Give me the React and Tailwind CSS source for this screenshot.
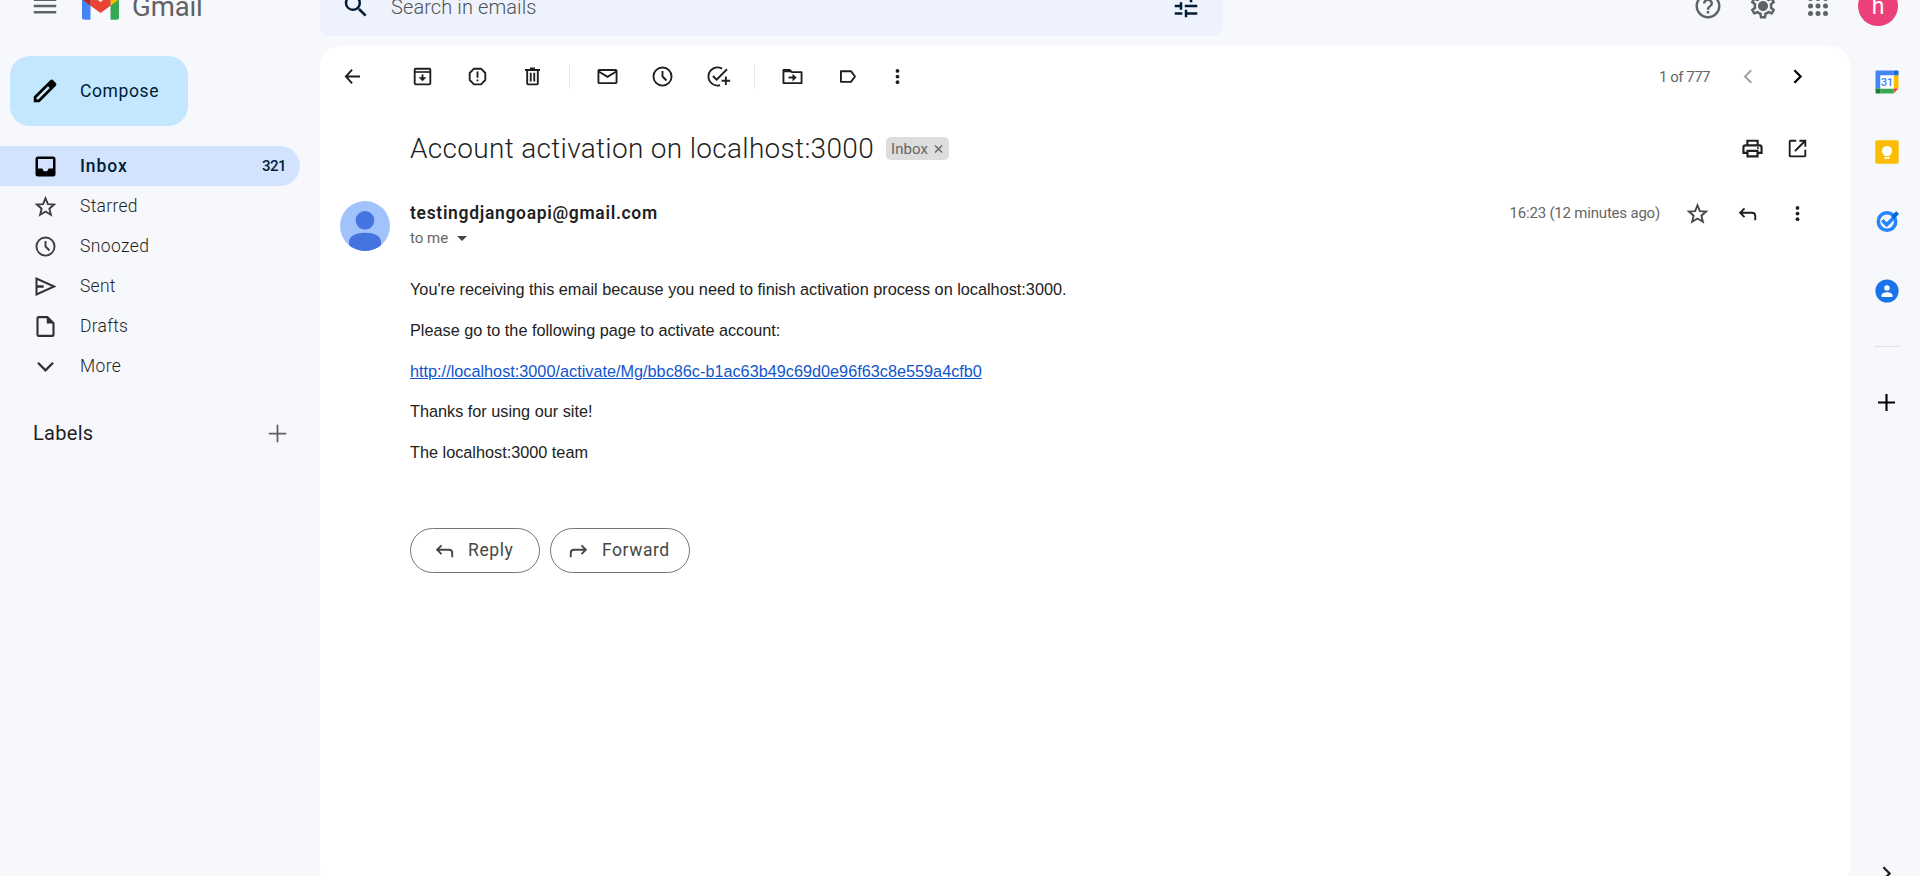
import { MdHelpOutline, MdMenu, MdOutlineSettings, MdSearch, MdTune } from "react-icons/md";

const Svg = ({ children, className = "size-[25px] text-[#1f1f1f]", box = 20, sw = 1.5 }) => (
  <svg viewBox={`0 0 ${box} ${box}`} className={`shrink-0 ${className}`} fill="none" stroke="currentColor" strokeWidth={sw}>
    {children}
  </svg>
);

const Dots = () => (
  <Svg>
    <g fill="currentColor" stroke="none">
      <circle cx="10" cy="5.5" r="1.5" />
      <circle cx="10" cy="10" r="1.5" />
      <circle cx="10" cy="14.5" r="1.5" />
    </g>
  </Svg>
);

const Archive = () => (
  <Svg>
    <rect x="3.75" y="3.75" width="12.5" height="12.5" rx="0.8" />
    <path d="M4 6.4h12" strokeWidth="1.3" />
    <path d="M10 8.3v3.5" />
    <path d="M6.8 10.5h6.4L10 13.8z" fill="currentColor" stroke="none" />
  </Svg>
);
const Report = () => (
  <Svg>
    <path d="M7.2 3.75h5.6l3.45 3.45v5.6l-3.45 3.45H7.2L3.75 12.8V7.2z" strokeLinejoin="round" />
    <path d="M10 6v5M10 12.3v1.5" />
  </Svg>
);
const Trash = () => (
  <Svg>
    <path d="M4 4.75h12M8 3.6h4" />
    <path d="M5.75 5v10.6q0 .65.65.65h7.2q.65 0 .65-.65V5" />
    <path d="M8.6 7v7M11.4 7v7" />
  </Svg>
);
const Mail = () => (
  <Svg>
    <rect x="2.75" y="4.75" width="14.5" height="10.5" rx="0.7" />
    <path d="M3 6l7 4.3L17 6" />
  </Svg>
);
const Clock = ({ className }) => (
  <Svg className={className}>
    <circle cx="10" cy="10" r="7.25" />
    <path d="M10 5.5V10l3.2 3.2" />
  </Svg>
);
const AddTask = () => (
  <Svg className="size-[25px] overflow-visible text-[#1f1f1f]">
    <path d="M13.6 3.7A7.25 7.25 0 1 0 12 17" />
    <path d="M6.3 9.6l3 3L17.6 4.2" />
    <path d="M16.7 10v6.8M13.3 13.4h6.8" />
  </Svg>
);
const MoveTo = () => (
  <Svg>
    <path d="M2.75 15.25V4.75h5l1.7 1.7h7.8v8.8z" strokeLinejoin="round" />
    <path d="M2.5 4.5h5.2l2 2H2.5z" fill="currentColor" stroke="none" />
    <path d="M6.8 10.8h4" />
    <path d="M10 7.7v6.2l3.3-3.1z" fill="currentColor" stroke="none" />
  </Svg>
);
const Label = () => (
  <Svg>
    <path d="M4.75 5.75h8L16 10l-3.25 4.25h-8z" strokeLinejoin="round" />
  </Svg>
);
const Star = ({ className }) => (
  <Svg className={className} sw={1.5}>
    <path d="M10 3.4l1.9 4.65 5 .4-3.8 3.3 1.2 4.9L10 14l-4.3 2.65 1.2-4.900-3.800-3.300 5-.4z" />
  </Svg>
);
const ReplyArrow = ({ className = "size-[25px] text-[#1f1f1f]" }) => (
  <Svg className={className}>
    <path d="M7.6 5.9L4.1 9.4l3.5 3.5M4.2 9.4h9.3q2.7 0 2.7 2.7v3.2" />
  </Svg>
);

const nav = [
  { name: "Starred", track: "tracking-[0.3px]", icon: <Star className="size-[25px] text-[#3c3d40]" /> },
  { name: "Snoozed", track: "tracking-[0.4px]", icon: <Clock className="size-[25px] text-[#3c3d40]" /> },
  {
    name: "Sent", track: "tracking-[0.25px]",
    icon: (
      <Svg className="size-[25px] text-[#303134]">
        <path d="M2.8 3.7v12.6L16.900 10z" strokeWidth="1.600" />
        <path d="M3 10h5.5" strokeWidth="2" />
      </Svg>
    ),
  },
  {
    name: "Drafts", track: "tracking-[0.25px]",
    icon: (
      <Svg className="size-[25px] text-[#303134]">
        <path d="M4.6 2.5h6.9l4.9 4.9v9.1q0 1-1 1H4.6q-1 0-1-1v-13q0-1 1-1z" strokeWidth="1.700" />
        <path d="M11 2.2v5.4h5.4z" fill="currentColor" stroke="none" />
      </Svg>
    ),
  },
  {
    name: "More", track: "tracking-[0.35px]",
    icon: (
      <Svg className="size-[25px] text-[#303134]" sw={1.9}>
        <path d="M4 7l6 6 6-6" />
      </Svg>
    ),
  },
];

const Cell = ({ children }) => <div className="flex w-[55px] justify-center">{children}</div>;

function Header() {
  return (
    <header className="-mt-[34px] flex h-20 shrink-0 items-center">
      <div className="flex w-80 shrink-0 items-center pl-[30px] text-[#5f6368]">
        <MdMenu className="size-[30px]" />
        <svg viewBox="0 0 37 28" className="ml-[22px] h-7 w-[37px]">
          <path d="M0 4v21.2Q0 27.7 2.5 27.7h6V7z" fill="#4285f4" />
          <path d="M37 4v21.2q0 2.5-2.5 2.5h-6V7z" fill="#34a853" />
          <path d="M28.5 2.5v11.2L37 7.3V4c0-3.4-3.7-5-6.3-3.2z" fill="#fbbc04" />
          <path d="M8.5 13.7V2.5l10 7.5 10-7.5v11.2l-10 7.4z" fill="#ea4335" />
          <path d="M0 4v3.3l8.5 6.4V2.5L6.3.8C3.700-1 0 .6 0 4z" fill="#c5221f" />
        </svg>
        <span className="ml-[13px] pt-0.5 text-[27.5px] leading-8 tracking-[-0.1px]">Gmail</span>
      </div>
      <div className="flex h-[60px] w-[903px] items-center rounded-[10px] bg-[#edf2fc] pr-[22px] pl-[21px] text-[#001d35]">
        <MdSearch className="size-[30px]" />
        <span className="ml-5 flex-1 pt-[2px] text-xl leading-6 font-light tracking-[0.1px] text-[#4f5358]">Search in emails</span>
        <MdTune className="size-[30px]" />
      </div>
      <div className="ml-auto flex items-center gap-[25px] pr-[22px] text-[#5f6368]">
        <MdHelpOutline className="size-[30px]" />
        <svg viewBox="0 0 24 24" className="size-[30px]">
          <MdOutlineSettings size="24" />
          <circle cx="12" cy="12" r="3.700" fill="currentColor" />
        </svg>
        <svg viewBox="0 0 24 24" className="size-[30px]" fill="currentColor">
          {[6, 12, 18].map((y) => [6, 12, 18].map((x) => <circle key={`${x}-${y}`} cx={x} cy={y} r="2" />))}
        </svg>
        <div className="flex size-10 items-center justify-center rounded-full bg-[#ec407a] pt-[2px] text-[23px] leading-6 text-white">h</div>
      </div>
    </header>
  );
}

function Sidebar() {
  return (
    <aside className="w-80 shrink-0 pt-[10px]">
      <div className="ml-[10px] flex h-[70px] w-[178px] items-center rounded-[20px] bg-[#c2e7ff] pl-5 text-[#001d35]">
        <svg viewBox="0 0 24 24" className="size-[30px] text-black">
          <path
            fill="currentColor" fillRule="evenodd"
            d="M3 21v-4.600L16.200 3.300q1.200-.9 2.300 0l2.200 2.200q.9 1.200 0 2.300L7.600 21zM5.200 18.800h1.400l9.200-9.200-1.400-1.400-9.200 9.200z"
          />
        </svg>
        <span className="ml-[20px] text-[17.5px] leading-5 tracking-[0.6px]">Compose</span>
      </div>
      <nav className="mt-5 w-[300px] text-[#1f1f1f]">
        <div className="flex h-10 items-center rounded-r-full bg-[#d3e3fd] pr-[14px] pl-[33px] text-[#001d35]">
          <svg viewBox="0 0 20 20" className="size-[25px] text-black">
            <path
              fill="currentColor" fillRule="evenodd"
              d="M4 2h12q2 0 2 2v12q0 2-2 2H4q-2 0-2-2V4q0-2 2-2zM4 4v7.500h3.600q.5 2.300 2.400 2.300t2.400-2.300H16V4z"
            />
          </svg>
          <span className="ml-[22px] flex-1 text-[17.5px] leading-5 font-medium tracking-[0.9px]">Inbox</span>
          <span className="text-[15px] leading-5 font-medium tracking-[-0.5px]">321</span>
        </div>
        {nav.map((n) => (
          <div key={n.name} className="flex h-10 items-center pl-[33px]">
            {n.icon}
            <span className={`ml-[22px] text-[17.5px] leading-5 font-light ${n.track}`}>{n.name}</span>
          </div>
        ))}
      </nav>
      <div className="mt-[35px] flex h-[24px] w-[290px] items-center justify-between pl-[33px] text-[#1f1f1f]">
        <span className="text-xl leading-6 tracking-[0.3px]">Labels</span>
        <Svg className="size-[25px] text-[#5f5f5f]" sw={1.4}>
          <path d="M10 3v14M3 10h14" />
        </Svg>
      </div>
    </aside>
  );
}

function Toolbar() {
  return (
    <div className="flex h-[61px] items-center pr-[40px] pl-[5px]">
      <Cell>
        <Svg>
          <path d="M16 10H5M9.700 4.500L4.700 10l5 5.500" />
        </Svg>
      </Cell>
      <div className="ml-[15px] flex items-center">
        <Cell><Archive /></Cell>
        <Cell><Report /></Cell>
        <Cell><Trash /></Cell>
        <div className="mr-[10px] ml-[9px] h-[25px] w-px bg-[#e6e8eb]" />
        <Cell><Mail /></Cell>
        <Cell><Clock /></Cell>
        <Cell><AddTask /></Cell>
        <div className="mr-[10px] ml-[9px] h-[25px] w-px bg-[#e6e8eb]" />
        <Cell><MoveTo /></Cell>
        <Cell><Label /></Cell>
        <div className="-ml-[5px] flex"><Cell><Dots /></Cell></div>
      </div>
      <span className="ml-auto text-[15px] leading-5 tracking-[-0.5px] text-[#666]">1 of 777</span>
      <div className="ml-[25px] flex gap-[25px]">
        <Svg className="size-[25px] text-[#a0a0a0]">
          <path d="M13 5l-5 5 5 5" />
        </Svg>
        <Svg className="size-[25px] text-black" sw={1.8}>
          <path d="M7.500 5l5 5-5 5" />
        </Svg>
      </div>
    </div>
  );
}

function Message() {
  return (
    <>
      <div className="flex h-[41px] items-center pr-[40px] pl-[90px]">
        <h1 className="text-[28px] leading-9 font-light tracking-[0.31px] text-[#1f1f1f]">Account activation on localhost:3000</h1>
        <div className="ml-[12px] flex h-[23px] w-[63px] items-center rounded-[5px] bg-[#ddd] pl-[5px] text-[#666]">
          <span className="text-[15px] leading-5 tracking-[0.1px]">Inbox</span>
          <Svg className="ml-[4px] size-[13px]" box={13} sw={1.4}>
            <path d="M3 3.500l7 7M10 3.500l-7 7" />
          </Svg>
        </div>
        <div className="ml-auto flex gap-5">
          <Svg>
            <path d="M5.900 7V3.750h8.200V7M5.900 13.500H2.750V9.200q0-1.700 1.700-1.700h11.100q1.700 0 1.700 1.700v4.300H14.100" strokeWidth="1.700" />
            <path d="M6 11.900h8v4.350H6z" strokeWidth="1.700" />
            <circle cx="14.300" cy="9.600" r=".8" fill="currentColor" stroke="none" />
          </Svg>
          <Svg>
            <path d="M9 3.750H4.500q-.75 0-.75.75v11q0 .75.750.750h11q.75 0 .75-.75V11M11.500 3.750h4.750V8.500M16 4L8 12" />
          </Svg>
        </div>
      </div>
      <div className="mt-[11px] flex pl-5">
        <svg viewBox="0 0 50 50" className="mt-[21px] size-[50px] shrink-0 rounded-full">
          <rect width="50" height="50" fill="#a1c2fa" />
          <circle cx="25" cy="19.300" r="9.300" fill="#4374e0" />
          <path d="M9 50V40.500C9.500 35 16 31.700 25 31.700s15.500 3.300 16 8.800V50z" fill="#4374e0" />
        </svg>
        <div className="ml-5 flex-1 pt-[21px]">
          <div className="flex items-center pr-[40px]">
            <span className="text-[17.5px] leading-[25px] font-semibold tracking-[0.68px] text-[#1f1f1f]">testingdjangoapi@gmail.com</span>
            <span className="ml-auto pb-px text-[15px] leading-5 tracking-[-0.2px] text-[#666]">16:23 (12 minutes ago)</span>
            <div className="ml-[25px] flex gap-[25px]">
              <Star className="size-[25px] text-[#444746]" />
              <ReplyArrow />
              <Dots />
            </div>
          </div>
          <div className="flex h-[25px] items-center text-[#666]">
            <span className="pb-[2px] text-[15px] leading-5">to me</span>
            <svg viewBox="0 0 10 5" className="ml-[9px] h-[5px] w-[10px]">
              <path d="M0 0h10L5 5z" fill="#444746" />
            </svg>
          </div>
          <div className="mt-[26.300px] space-y-[16.25px] font-['Liberation_Sans',Arial,sans-serif] text-[16.25px] leading-[24.375px] text-[#222]">
            <p>You're receiving this email because you need to finish activation process on localhost:3000.</p>
            <p>Please go to the following page to activate account:</p>
            <p>
              <a className="text-[#1155cc] underline">http://localhost:3000/activate/Mg/bbc86c-b1ac63b49c69d0e96f63c8e559a4cfb0</a>
            </p>
            <p>Thanks for using our site!</p>
            <p>The localhost:3000 team</p>
          </div>
          <div className="mt-[63.800px] flex gap-[10px] text-[17.5px] leading-5 text-[#444746]">
            <button className="flex h-[45px] w-[130px] items-center rounded-full border border-[#747775] pl-[21px]">
              <ReplyArrow className="size-[25px]" />
              <span className="ml-[11px] tracking-[0.6px]">Reply</span>
            </button>
            <button className="flex h-[45px] w-[140px] items-center rounded-full border border-[#747775] pl-[15px]">
              <ReplyArrow className="size-[25px] -scale-x-100" />
              <span className="ml-[11px] tracking-[0.55px]">Forward</span>
            </button>
          </div>
        </div>
      </div>
    </>
  );
}

function Rail() {
  return (
    <aside className="flex w-[70px] shrink-0 flex-col items-center pl-[3px]">
      <div className="flex h-[70px] items-center pt-px">
        <svg viewBox="0 0 24 24" className="size-6">
          <path d="M1.500.5h17v5H5.500v13h-5v-17q0-1 1-1z" fill="#4285f4" />
          <path d="M18.500.5h4q1 0 1 1v4h-5z" fill="#1967d2" />
          <path d="M18.500 5.500h5v13h-5z" fill="#fbbc04" />
          <path d="M5.500 18.500h13v5h-13z" fill="#34a853" />
          <path d="M.5 18.500h5v5h-4q-1 0-1-1z" fill="#188038" />
          <path d="M18.500 18.500h5l-5 5z" fill="#ea4335" />
          <path d="M5.500 5.500h13v13h-13z" fill="#fff" />
          <text x="12" y="15.800" textAnchor="middle" fontSize="10.500" fontWeight="600" fill="#4285f4">31</text>
        </svg>
      </div>
      <div className="flex h-[70px] items-center pt-px">
        <svg viewBox="0 0 24 24" className="size-6">
          <rect x=".3" y=".3" width="23.400" height="23.400" rx="1.800" fill="#fbbc04" />
          <path d="M12 6a5 5 0 0 0-2.700 9.200V16h5.400v-.8A5 5 0 0 0 12 6zM9.300 17h5.400v1.700H9.300z" fill="#fff" />
        </svg>
      </div>
      <div className="flex h-[70px] items-center">
        <svg viewBox="0 0 24 24" className="size-6">
          <circle cx="12" cy="12.500" r="8.700" fill="none" stroke="#2684fc" strokeWidth="3.600" />
          <path d="M7.200 11.300l4.500 4.400L20 7.500" fill="none" stroke="#2684fc" strokeWidth="3.600" />
          <path d="M16.200 7.300l5-5L24 5l-5 5z" fill="#0066da" />
        </svg>
      </div>
      <div className="flex h-[70px] items-center">
        <svg viewBox="0 0 24 24" className="size-6">
          <circle cx="12" cy="12" r="11.600" fill="#1a73e8" />
          <circle cx="12" cy="8.900" r="2.700" fill="#fff" />
          <path d="M6.500 18v-1.600c0-2 3-3.200 5.500-3.200s5.500 1.200 5.500 3.200V18z" fill="#fff" />
        </svg>
      </div>
      <div className="mt-[20px] h-px w-[25px] bg-[#dfe1dc]" />
      <Svg className="mt-[43px] size-[25px] text-black" sw={1.7}>
        <path d="M10 3.200v13.600M3.200 10h13.600" />
      </Svg>
      <Svg className="mt-auto mb-[2px] size-[25px] text-[#1f1f1f]" sw={1.8}>
        <path d="M7.500 5l5 5-5 5" />
      </Svg>
    </aside>
  );
}

export default function App() {
  return (
    <div className="h-[876px] w-[1920px] overflow-hidden bg-[#f6f8fc] font-[Roboto,sans-serif]">
      <div className="flex h-[922px] flex-col">
        <Header />
        <div className="flex h-[842px] shrink-0">
          <Sidebar />
          <main className="w-[1530px] shrink-0 rounded-[20px] bg-white">
            <Toolbar />
            <div className="h-[21px]" />
            <Message />
          </main>
          <Rail />
        </div>
      </div>
    </div>
  );
}
